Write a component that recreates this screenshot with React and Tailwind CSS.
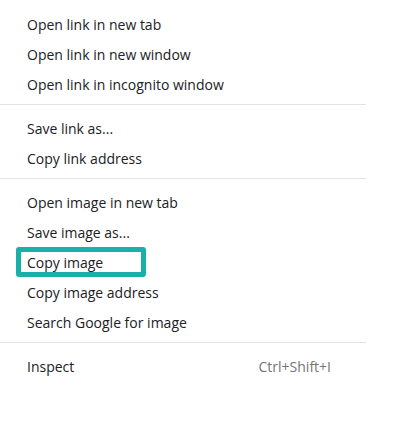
import React from 'react';

const groups = [
  ['Open link in new tab', 'Open link in new window', 'Open link in incognito window'],
  ['Save link as...', 'Copy link address'],
  ['Open image in new tab', 'Save image as...', 'Copy image', 'Copy image address', 'Search Google for image'],
  [{ label: 'Inspect', shortcut: 'Ctrl+Shift+I' }],
];

function MenuRow({ item }) {
  const label = typeof item === 'string' ? item : item.label;
  const shortcut = typeof item === 'string' ? null : item.shortcut;
  const highlighted = label === 'Copy image';

  return (
    <div className="relative h-[30px] flex items-center justify-between pl-[27px] pr-[35px]">
      {/* teal outline that marks the chosen entry */}
      {highlighted && (
        <div className="absolute left-[16px] top-0 w-[130px] h-[30px] border-[5px] border-[#17b1aa] rounded-[3px]" />
      )}
      <span className="relative text-[14px] text-[#202124]">{label}</span>
      {shortcut && <span className="text-[14px] text-[#757575]">{shortcut}</span>}
    </div>
  );
}

export default function App() {
  return (
    <div
      className="w-[393px] h-[434px] bg-white overflow-hidden"
      style={{ fontFamily: '"Open Sans", "Noto Sans", Arial, sans-serif' }}
    >
      <div className="w-[366px] pt-[9px]">
        {groups.map((group, gi) => (
          <div key={gi}>
            {gi > 0 && (
              <div className="pt-[5px] pb-[8px]">
                <div className="h-px bg-[#e3e3e3]" />
              </div>
            )}
            {group.map((item, i) => (
              <MenuRow key={i} item={item} />
            ))}
          </div>
        ))}
      </div>
    </div>
  );
}
